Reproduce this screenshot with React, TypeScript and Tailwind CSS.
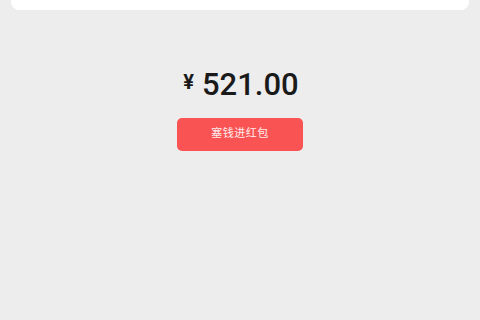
import React from 'react';

export default function App() {
  return (
    <div className="w-[480px] h-[320px] bg-[#ededed] overflow-hidden" style={{ fontFamily: 'Roboto, "Noto Sans CJK SC", sans-serif' }}>
      <div className="mx-[11px] h-[10px] bg-white rounded-b-[8px]" />
      <div className="flex flex-col items-center pt-[59px]">
        <div className="flex items-center text-[#1a1a1a] pl-[2px]">
          <span className="text-[20px] font-bold leading-none mr-[8px] -mt-[6px]">¥</span>
          <span className="text-[31px] font-medium leading-none">521.00</span>
        </div>
        <button className="mt-[18px] w-[126px] h-[33px] rounded-[5px] bg-[#f95453] text-white/90 text-[11px] tracking-[0.5px]">
          塞钱进红包
        </button>
      </div>
    </div>
  );
}
